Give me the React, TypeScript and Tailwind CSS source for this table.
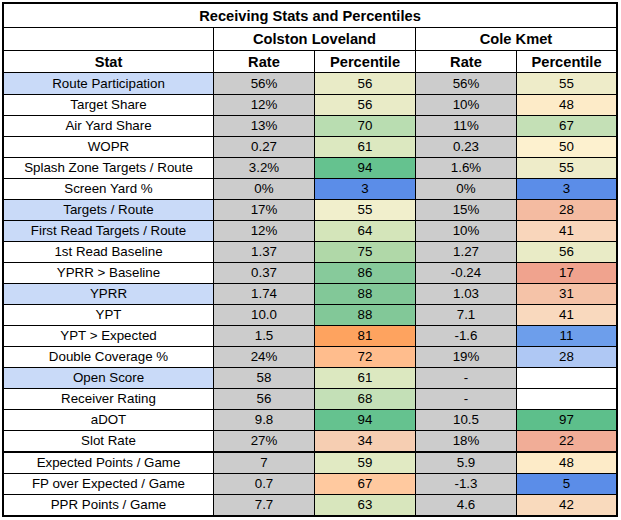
import React from "react";

type Row = {
  stat: string;
  hl?: boolean;
  r1: string;
  p1: string;
  c1: string;
  r2: string;
  p2: string;
  c2: string;
};

const rows: Row[] = [
  { stat: "Route Participation", hl: true, r1: "56%", p1: "56", c1: "#e9ebc7", r2: "56%", p2: "55", c2: "#eeecc9" },
  { stat: "Target Share", r1: "12%", p1: "56", c1: "#e9ebc7", r2: "10%", p2: "48", c2: "#fdebc8" },
  { stat: "Air Yard Share", r1: "13%", p1: "70", c1: "#b9ddb1", r2: "11%", p2: "67", c2: "#c4e0b6" },
  { stat: "WOPR", r1: "0.27", p1: "61", c1: "#dce8c0", r2: "0.23", p2: "50", c2: "#fdf1cf" },
  { stat: "Splash Zone Targets / Route", r1: "3.2%", p1: "94", c1: "#65c28f", r2: "1.6%", p2: "55", c2: "#eeecc9" },
  { stat: "Screen Yard %", r1: "0%", p1: "3", c1: "#5b8de8", r2: "0%", p2: "3", c2: "#5b8de8" },
  { stat: "Targets / Route", hl: true, r1: "17%", p1: "55", c1: "#f1efcc", r2: "15%", p2: "28", c2: "#f4bba1" },
  { stat: "First Read Targets / Route", hl: true, r1: "12%", p1: "64", c1: "#d4e5ba", r2: "10%", p2: "41", c2: "#f9d6bb" },
  { stat: "1st Read Baseline", r1: "1.37", p1: "75", c1: "#b0d8a8", r2: "1.27", p2: "56", c2: "#e9ebc6" },
  { stat: "YPRR > Baseline", r1: "0.37", p1: "86", c1: "#87ca9b", r2: "-0.24", p2: "17", c2: "#f0a38e" },
  { stat: "YPRR", hl: true, r1: "1.74", p1: "88", c1: "#82c898", r2: "1.03", p2: "31", c2: "#f5c3a8" },
  { stat: "YPT", r1: "10.0", p1: "88", c1: "#82c898", r2: "7.1", p2: "41", c2: "#f9d9be" },
  { stat: "YPT > Expected", r1: "1.5", p1: "81", c1: "#fea35f", r2: "-1.6", p2: "11", c2: "#6d9eeb" },
  { stat: "Double Coverage %", r1: "24%", p1: "72", c1: "#ffbd8d", r2: "19%", p2: "28", c2: "#afc8f4" },
  { stat: "Open Score", hl: true, r1: "58", p1: "61", c1: "#dce8c0", r2: "-", p2: "", c2: "#ffffff" },
  { stat: "Receiver Rating", r1: "56", p1: "68", c1: "#c4e0b7", r2: "-", p2: "", c2: "#ffffff" },
  { stat: "aDOT", r1: "9.8", p1: "94", c1: "#65c28f", r2: "10.5", p2: "97", c2: "#5dbf8b" },
  { stat: "Slot Rate", r1: "27%", p1: "34", c1: "#f6ceb2", r2: "18%", p2: "22", c2: "#f1ad97" },
  { stat: "Expected Points / Game", r1: "7", p1: "59", c1: "#e1eac3", r2: "5.9", p2: "48", c2: "#fdebc8" },
  { stat: "FP over Expected / Game", r1: "0.7", p1: "67", c1: "#ffc99f", r2: "-1.3", p2: "5", c2: "#5b8de8" },
  { stat: "PPR Points / Game", r1: "7.7", p1: "63", c1: "#d8e6bd", r2: "4.6", p2: "42", c2: "#f9dabd" },
];

const cell = "flex items-center justify-center border-r border-black";

export default function App() {
  return (
    <div
      className="bg-white w-[621px] h-[520px] pt-[2px] pl-[2px] text-black"
      style={{ fontFamily: '"Liberation Sans", Arial, sans-serif' }}
    >
      <div className="w-[616px] border-2 border-black flex flex-col">
        <div className="h-[24px] border-b border-black flex items-center justify-center font-bold text-[14.67px]">
          Receiving Stats and Percentiles
        </div>
        <div className="h-[23px] border-b border-black grid grid-cols-[210px_202px_200px] font-bold text-[14.67px]">
          <div className="border-r border-black" />
          <div className={cell}>Colston Loveland</div>
          <div className="flex items-center justify-center">Cole Kmet</div>
        </div>
        <div className="h-[22px] border-b border-black grid grid-cols-[210px_101px_101px_101px_99px] font-bold text-[14.67px]">
          <div className={cell}>Stat</div>
          <div className={cell}>Rate</div>
          <div className={cell}>Percentile</div>
          <div className={cell}>Rate</div>
          <div className="flex items-center justify-center">Percentile</div>
        </div>
        {rows.map((r, i) => {
          const isFirst = i === 0;
          const isSlot = r.stat === "Slot Rate";
          const isLast = i === rows.length - 1;
          const h = isFirst
            ? "h-[22px] border-b border-black"
            : isSlot
            ? "h-[22px] border-b-2 border-black"
            : isLast
            ? "h-[20px]"
            : "h-[21px] border-b border-black";
          return (
            <div
              key={r.stat}
              className={`${h} grid grid-cols-[210px_101px_101px_101px_99px] text-[13.33px] leading-none`}
            >
              <div className={`${cell} ${r.hl ? "bg-[#c9daf8]" : "bg-white"}`}>{r.stat}</div>
              <div className={`${cell} bg-[#cccccc]`}>{r.r1}</div>
              <div className={cell} style={{ backgroundColor: r.c1 }}>
                {r.p1}
              </div>
              <div className={`${cell} bg-[#cccccc]`}>{r.r2}</div>
              <div className="flex items-center justify-center" style={{ backgroundColor: r.c2 }}>
                {r.p2}
              </div>
            </div>
          );
        })}
      </div>
    </div>
  );
}
